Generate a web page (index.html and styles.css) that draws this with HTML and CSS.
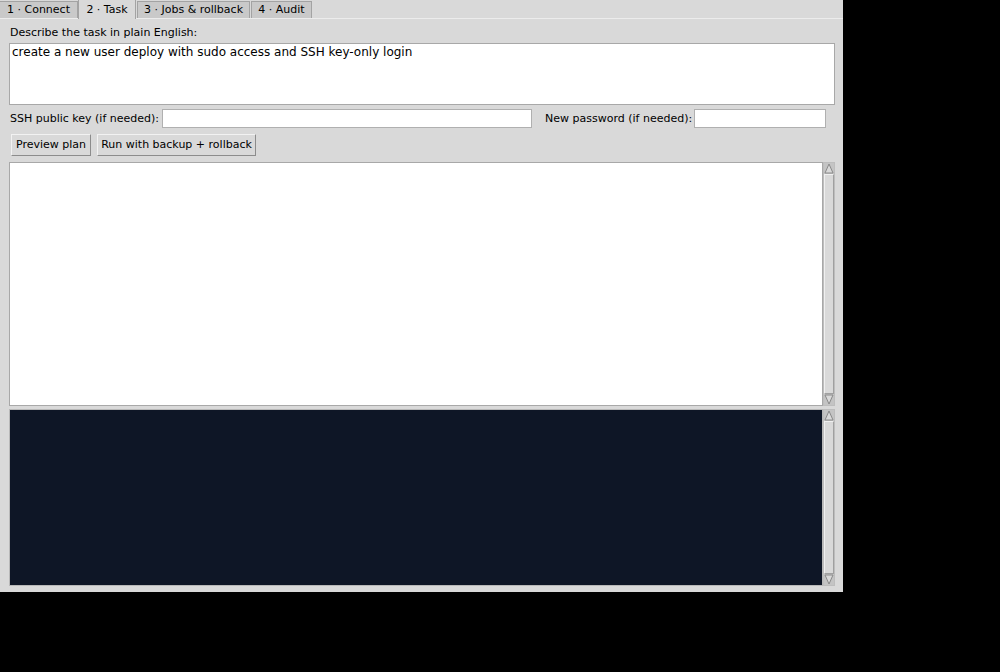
FILE: index.html
```html
<!DOCTYPE html>
<html>
<head>
<meta charset="utf-8">
<link rel="stylesheet" href="styles.css">
</head>
<body>
<div class="app">
  <div class="tabs">
    <div class="tab t1">1 · Connect</div>
    <div class="tab t2 active">2 · Task</div>
    <div class="tab t3">3 · Jobs &amp; rollback</div>
    <div class="tab t4">4 · Audit</div>
  </div>
  <div class="pane">
    <div class="label">Describe the task in plain English:</div>
    <div class="task">create a new user deploy with sudo access and SSH key-only login</div>
    <div class="row">
      <span class="lbl key-l">SSH public key (if needed):</span>
      <div class="entry key"></div>
      <span class="lbl pw">New password (if needed):</span>
      <div class="entry pass"></div>
    </div>
    <div class="buttons">
      <div class="btn b1">Preview plan</div>
      <div class="btn b2">Run with backup + rollback</div>
    </div>
    <div class="textrow plan">
      <div class="text white"></div>
      <div class="sb">
        <div class="arrow up"><svg width="10" height="11" viewBox="0 0 10 11"><path d="M1 10 L5 1 L9 10 Z" fill="#d9d9d9" stroke="#8a8a8a"/></svg></div>
        <div class="trough"></div>
        <div class="arrow down"><svg width="10" height="11" viewBox="0 0 10 11"><path d="M1 1 L5 10 L9 1 Z" fill="#d9d9d9" stroke="#8a8a8a"/></svg></div>
      </div>
    </div>
    <div class="textrow log">
      <div class="text dark"></div>
      <div class="sb">
        <div class="arrow up"><svg width="10" height="11" viewBox="0 0 10 11"><path d="M1 10 L5 1 L9 10 Z" fill="#d9d9d9" stroke="#8a8a8a"/></svg></div>
        <div class="trough"></div>
        <div class="arrow down"><svg width="10" height="11" viewBox="0 0 10 11"><path d="M1 1 L5 10 L9 1 Z" fill="#d9d9d9" stroke="#8a8a8a"/></svg></div>
      </div>
    </div>
  </div>
</div>
</body>
</html>
```

FILE: styles.css
```css
html, body {
  margin: 0;
  padding: 0;
  background: #000;
}
body {
  font-family: "DejaVu Sans", sans-serif;
  font-size: 11px;
  color: #000;
}
.app {
  width: 843px;
  height: 592px;
  background: #d9d9d9;
  display: flex;
  flex-direction: column;
}
.tabs {
  display: flex;
  align-items: flex-end;
  height: 19px;
  border-bottom: 1px solid #ececec;
  box-sizing: border-box;
}
.tab {
  height: 17px;
  line-height: 16px;
  text-align: center;
  background: #c9c9c9;
  border: 1px solid #a3a3a3;
  border-bottom: none;
  box-sizing: border-box;
  white-space: nowrap;
}
.t1 { width: 78px; border-left: none; }
.t2 { width: 58px; }
.t3 { width: 113px; margin-left: 1px; }
.t4 { width: 61px; margin-left: 1px; }
.tab.active {
  background: #d9d9d9;
  height: 20px;
  line-height: 19px;
  margin-bottom: -1px;
  border-top: 1px solid #7f8ea3;
}
.pane {
  padding: 6px 9px 6px 9px;
  flex: 1;
  display: flex;
  flex-direction: column;
}
.label {
  height: 16px;
  line-height: 16px;
  padding-left: 1px;
  margin-bottom: 2px;
  white-space: nowrap;
}
.task {
  height: 62px;
  box-sizing: border-box;
  background: #fff;
  border: 1px solid #a8a8a8;
  padding: 1px 2px;
  font-size: 12px;
  line-height: 14px;
  width: 826px;
}
.row {
  display: flex;
  align-items: center;
  height: 22px;
  margin-top: 2px;
  white-space: nowrap;
}
.lbl {
  padding-left: 1px;
}
.key-l { width: 152px; }
.entry {
  height: 19px;
  box-sizing: border-box;
  background: #fff;
  border: 1px solid #b0b0b0;
}
.entry.key { width: 370px; }
.lbl.pw { margin-left: 12px; width: 149px; }
.entry.pass { width: 132px; }
.buttons {
  display: flex;
  gap: 6px;
  margin-top: 5px;
  padding-left: 2px;
}
.btn {
  height: 22px;
  line-height: 20px;
  box-sizing: border-box;
  text-align: center;
  background: #d9d9d9;
  border: 1px solid;
  border-color: #f2f2f2 #8c8c8c #8c8c8c #f2f2f2;
  white-space: nowrap;
}
.b1 { width: 80px; }
.b2 { width: 159px; }
.textrow {
  display: flex;
  width: 826px;
}
.textrow.plan {
  margin-top: 6px;
  height: 244px;
}
.textrow.log {
  margin-top: 3px;
  height: 177px;
}
.text {
  flex: 1;
  box-sizing: border-box;
  border: 1px solid #a8a8a8;
}
.text.white { background: #fff; }
.text.dark { background: #0e1626; border-color: #b8b8b8; }
.sb {
  width: 12px;
  display: flex;
  flex-direction: column;
  background: #c4c4c4;
  box-sizing: border-box;
  border: 1px solid #bdbdbd;
}
.arrow {
  height: 11px;
  display: flex;
  align-items: center;
  justify-content: center;
}
.trough {
  flex: 1;
  background: #d9d9d9;
  border: 1px solid;
  border-color: #f0f0f0 #a0a0a0 #a0a0a0 #f0f0f0;
}
```
